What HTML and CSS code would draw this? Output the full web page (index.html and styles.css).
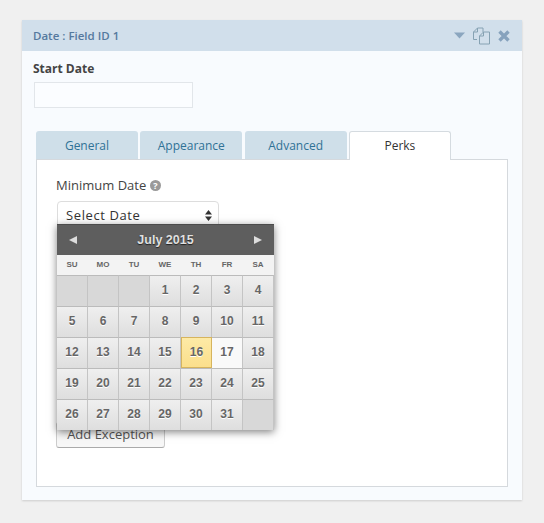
FILE: index.html
```html
<!DOCTYPE html>
<html>
<head>
    <title>Date Field Settings</title>
    <link rel="stylesheet" href="styles.css">
</head>
<body>
    <div class="card">
        <div class="card-head">
            <span class="card-title">Date : Field ID 1</span>
            <div class="card-icons">
                <svg class="icon-arrow" width="11" height="7" viewBox="0 0 11 7"><path d="M0 0.5h11L5.5 6.5z"/></svg>
                <svg class="icon-copy" width="19" height="18" viewBox="0 0 19 18"><path d="M5 12.5H1.5V5L5.5 1h5.5v4M5.5 1v4h-4"/><path d="M7.5 17V9l4-4h6v12zM11.5 5v4h-4"/></svg>
                <svg class="icon-close" width="12" height="12" viewBox="0 0 12 12"><path d="M1.5 1.5l9 9M10.5 1.5l-9 9"/></svg>
            </div>
        </div>
        <div class="card-body">
            <label class="field-label">Start Date</label>
            <div class="field-input"></div>

            <div class="tabs">
                <div class="tab">General</div>
                <div class="tab">Appearance</div>
                <div class="tab">Advanced</div>
                <div class="tab active">Perks</div>
            </div>
            <div class="panel">
                <div class="min-label">Minimum Date
                    <svg class="help" width="11" height="11" viewBox="0 0 11 11"><circle cx="5.5" cy="5.5" r="5.5"/><text x="5.5" y="8.8" text-anchor="middle">?</text></svg>
                </div>
                <div class="select-box">
                    <span>Select Date</span>
                    <svg width="7" height="11" viewBox="0 0 7 11"><path d="M3.5 0L7 4.5H0zM0 6.5h7L3.5 11z"/></svg>
                </div>
                <div class="add-btn">Add Exception</div>

                <div class="calendar">
                    <div class="cal-head">
                        <svg width="8" height="8" viewBox="0 0 8 8"><path d="M0 4L8 0v8z"/></svg>
                        <span class="cal-month">July 2015</span>
                        <svg width="8" height="8" viewBox="0 0 8 8"><path d="M8 4L0 0v8z"/></svg>
                    </div>
                    <div class="cal-days">
                        <span>SU</span><span>MO</span><span>TU</span><span>WE</span><span>TH</span><span>FR</span><span>SA</span>
                    </div>
                    <div class="cal-grid">
                        <div class="empty"></div><div class="empty"></div><div class="empty"></div>
                        <div>1</div><div>2</div><div>3</div><div>4</div>
                        <div>5</div><div>6</div><div>7</div><div>8</div><div>9</div><div>10</div><div>11</div>
                        <div>12</div><div>13</div><div>14</div><div>15</div><div class="today">16</div><div class="hover">17</div><div>18</div>
                        <div>19</div><div>20</div><div>21</div><div>22</div><div>23</div><div>24</div><div>25</div>
                        <div>26</div><div>27</div><div>28</div><div>29</div><div>30</div><div>31</div><div class="empty"></div>
                    </div>
                </div>
            </div>
        </div>
    </div>
</body>
</html>
```

FILE: styles.css
```css
* {
    box-sizing: border-box;
}

body {
    margin: 0;
    height: 523px;
    overflow: hidden;
    padding: 20px 22px;
    background-color: #f0f0f0;
    font-family: "Open Sans", sans-serif;
    color: #444;
}

.card {
    width: 500px;
    height: 480px;
    background-color: #f8fbfe;
    box-shadow: 0 1px 2px rgba(0, 0, 0, 0.15);
}

.card-head {
    height: 31px;
    background-color: #d1dfeb;
    display: flex;
    align-items: center;
    justify-content: space-between;
    padding: 0 12px 0 11px;
}

.card-title {
    font-size: 11.5px;
    font-weight: 600;
    color: #55799e;
}

.card-icons {
    display: flex;
    align-items: center;
    gap: 7px;
}

.icon-arrow {
    fill: #8ba6bf;
}

.icon-copy {
    fill: none;
    stroke: #86a2b3;
    stroke-width: 1;
}

.icon-close {
    stroke: #86a2bd;
    stroke-width: 3.4;
}

.card-body {
    padding: 10px 14px 0;
}

.field-label {
    display: block;
    margin-left: -3px;
    font-size: 12px;
    font-weight: 700;
    line-height: 16px;
    color: #444;
}

.field-input {
    width: 159px;
    height: 26px;
    margin: 5px 0 0 -2px;
    border: 1px solid #e2e6ea;
    background-color: #fbfdff;
}

.tabs {
    display: flex;
    gap: 2.3px;
    margin-top: 23px;
    height: 29px;
}

.tab {
    width: 102px;
    background-color: #cfdfe9;
    border-radius: 3px 3px 0 0;
    color: #2f7296;
    font-size: 12px;
    line-height: 29px;
    text-align: center;
}

.tab.active {
    position: relative;
    height: 29px;
    background-color: #fff;
    border: 1px solid #d5dbe0;
    border-bottom: none;
    color: #333;
    line-height: 27px;
    z-index: 1;
}

.panel {
    position: relative;
    width: 472px;
    height: 328px;
    margin-top: -1px;
    padding: 16px 20px 0;
    background-color: #fff;
    border: 1px solid #d5d9dd;
}

.min-label {
    display: flex;
    align-items: center;
    gap: 4px;
    margin-left: -1px;
    font-size: 13px;
    line-height: 18px;
    color: #444;
}

.help {
    fill: #999;
}

.help text {
    fill: #fff;
    font-size: 9px;
    font-weight: 700;
    font-family: "Open Sans", sans-serif;
}

.select-box {
    width: 162px;
    height: 28px;
    margin: 7px 0 0 0;
    padding: 0 6px 0 8px;
    display: flex;
    justify-content: space-between;
    align-items: center;
    border: 1px solid #ddd;
    border-radius: 4px;
    background-color: #fff;
    font-size: 13px;
    color: #333;
    letter-spacing: 0.6px;
}

.select-box svg {
    fill: #333;
}

.add-btn {
    width: 109px;
    height: 26px;
    margin: 193px 0 0 -1px;
    border: 1px solid #ccc;
    border-bottom-color: #aaa;
    border-radius: 3px;
    background-color: #f7f7f7;
    font-size: 13px;
    line-height: 23px;
    text-align: center;
    color: #555;
}

.calendar {
    position: absolute;
    left: 20px;
    top: 64px;
    width: 217px;
    box-shadow: 0 2px 8px rgba(0, 0, 0, 0.5);
    background-color: #f0f0f0;
    font-family: "Liberation Sans", Arial, sans-serif;
}

.cal-head {
    height: 31px;
    background-color: #5e5e5e;
    border-top: 1px solid #4c4c4c;
    display: flex;
    align-items: center;
    justify-content: space-between;
    padding: 0 12px;
}

.cal-head svg {
    fill: #ddd;
}

.cal-month {
    font-size: 12.5px;
    font-weight: 700;
    color: #e0e0e0;
    text-shadow: 0 1px 1px #222;
}

.cal-days {
    display: grid;
    grid-template-columns: repeat(7, 30px);
    column-gap: 1px;
    height: 20px;
    background-color: #f3f3f3;
    font-size: 8px;
    font-weight: 700;
    line-height: 20px;
    text-align: center;
    color: #666;
}

.cal-grid {
    display: grid;
    grid-template-columns: repeat(7, 31px);
    grid-auto-rows: 31px;
}

.cal-grid div {
    background: linear-gradient(#efefef, #dedede);
    border-top: 1px solid #bbb;
    border-right: 1px solid #c4c4c4;
    font-size: 12px;
    font-weight: 700;
    line-height: 28px;
    text-align: center;
    color: #666;
    text-shadow: 0 1px 0 #fff;
}

.cal-grid .empty {
    background: #d8d8d8;
}

.cal-grid .today {
    background: linear-gradient(#fdeaa6, #fbdf8c);
    border: 1px solid #d6b45e;
}

.cal-grid .hover {
    background: #f9f9f9;
}
```
